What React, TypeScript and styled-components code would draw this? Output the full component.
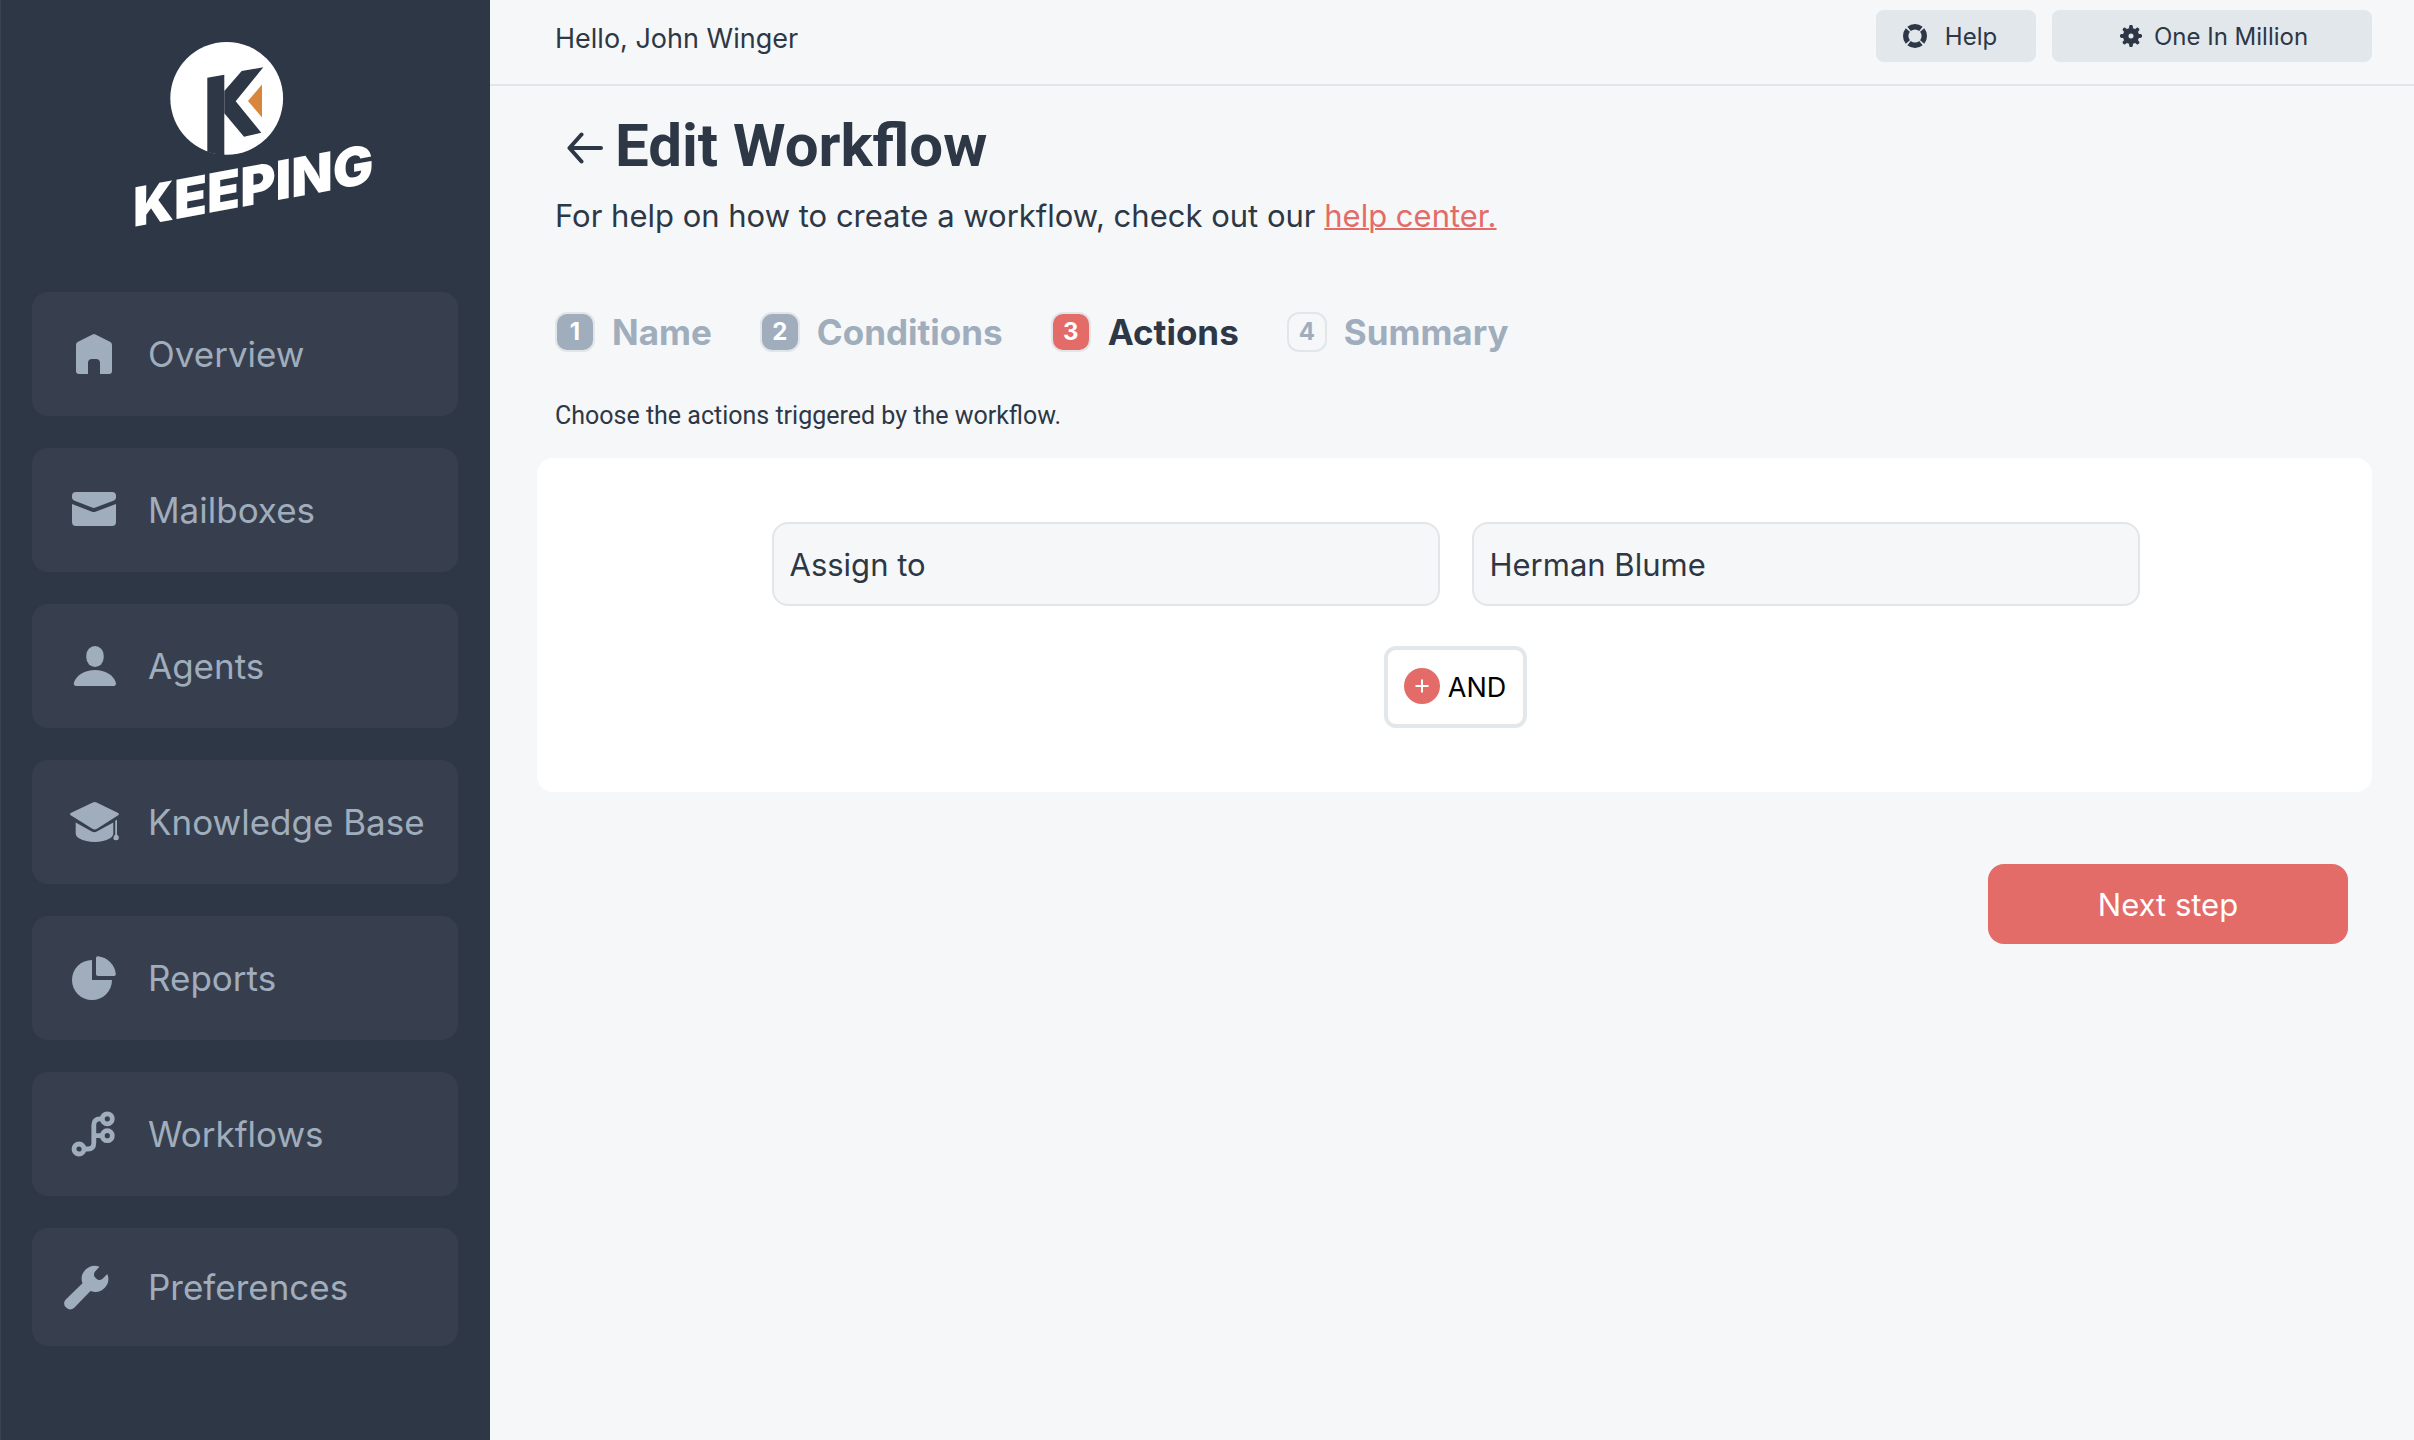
import React from "react";
import styled, { createGlobalStyle, css } from "styled-components";

const color = {
  navy: "#2d3746",
  navyItem: "#373f4e",
  navyEdge: "#384454",
  muted: "#a0adbc",
  ink: "#2d3745",
  page: "#f5f7f9",
  line: "#e2e6e9",
  chip: "#e2e7eb",
  accent: "#e36c68",
  brandOrange: "#d9863d",
};

const sans = `Inter, Roboto, "Liberation Sans", sans-serif`;
const rounded = `Roboto, Inter, "Liberation Sans", sans-serif`;

const GlobalStyle = createGlobalStyle`
  *, *::before, *::after { box-sizing: border-box; }
  body { margin: 0; background: ${color.page}; color: ${color.ink}; font-family: ${sans}; }
  button, select { font-family: inherit; }
`;

const Shell = styled.div`
  display: grid;
  grid-template-columns: 490px minmax(0, 1fr);
  min-height: 100vh;
`;

const Sidebar = styled.aside`
  display: flex;
  flex-direction: column;
  gap: 64px;
  padding: 40px 32px 64px 31px;
  border-left: 1px solid ${color.navyEdge};
  background: ${color.navy};
`;

const Brand = styled.a`
  display: block;
  align-self: center;
  height: 188px;
  margin-left: 18px;
`;

const Nav = styled.nav`
  display: flex;
  flex-direction: column;
  gap: 32px;
`;

const NavItem = styled.a<{ $short?: boolean }>`
  display: flex;
  align-items: center;
  gap: 32px;
  height: ${(p) => (p.$short ? 118 : 124)}px;
  padding-left: 40px;
  border-radius: 16px;
  background: ${color.navyItem};
  color: ${color.muted};
  font-size: 35px;
  text-decoration: none;
  white-space: nowrap;
`;

const NavIcon = styled.svg`
  flex: none;
  width: 44px;
  height: 44px;
  overflow: visible;
  fill: currentColor;
`;

const Column = styled.div`
  display: flex;
  flex-direction: column;
`;

const TopBar = styled.header`
  display: flex;
  align-items: center;
  justify-content: space-between;
  padding: 10px 42px 22px 65px;
  border-bottom: 2px solid ${color.line};
`;

const Greeting = styled.p`
  margin: 6px 0 0;
  font-size: 27px;
  line-height: 32px;
`;

const TopActions = styled.div`
  display: flex;
  gap: 16px;
`;

const ChipButton = styled.button<{ $wide?: boolean }>`
  display: flex;
  align-items: center;
  justify-content: center;
  gap: ${(p) => (p.$wide ? 12 : 18)}px;
  width: ${(p) => (p.$wide ? 320 : 160)}px;
  height: 52px;
  padding: ${(p) => (p.$wide ? "0 0 0 4px" : "0 12px 0 0")};
  border: 0;
  border-radius: 8px;
  background: ${color.chip};
  color: ${color.ink};
  font-size: 24px;
`;

const Main = styled.main`
  display: flex;
  flex-direction: column;
  padding: 24px 42px 48px 47px;
`;

const Intro = styled.div`
  padding-left: 18px;
`;

const TitleRow = styled.div`
  display: flex;
  align-items: center;
  gap: 12px;
  padding-left: 12px;
`;

const BackButton = styled.button`
  display: flex;
  padding: 4px 0 0;
  border: 0;
  background: none;
  color: ${color.ink};
`;

const Title = styled.h1`
  margin: 0;
  font-family: ${rounded};
  font-size: 60px;
  font-weight: 700;
  line-height: 72px;
`;

const Lead = styled.p`
  margin: 14px 0 0;
  font-size: 31px;
  line-height: 40px;
`;

const HelpLink = styled.a`
  color: ${color.accent};
  text-decoration: underline;
  text-decoration-thickness: 2px;
`;

const Steps = styled.ol`
  display: flex;
  gap: 48px;
  margin: 76px 0 0;
  padding: 0;
  list-style: none;
`;

type StepState = "done" | "current" | "next";

const Step = styled.li<{ $state: StepState }>`
  display: flex;
  align-items: center;
  gap: 17px;
  color: ${(p) => (p.$state === "current" ? color.ink : color.muted)};
  font-size: 35px;
  font-weight: 700;
  line-height: 40px;
`;

const StepBadge = styled.span<{ $state: StepState }>`
  display: flex;
  align-items: center;
  justify-content: center;
  width: 40px;
  height: 40px;
  border: 2px solid ${color.line};
  border-radius: 12px;
  font-size: 24px;
  ${(p) =>
    p.$state !== "next" &&
    css`
      background: ${p.$state === "current" ? color.accent : color.muted};
      color: #fff;
    `}
`;

const Hint = styled.p`
  margin: 48px 0 26px;
  font-family: ${rounded};
  font-size: 25px;
  line-height: 32px;
`;

const Card = styled.section`
  display: flex;
  flex-direction: column;
  align-items: center;
  gap: 40px;
  padding: 64px 48px 64px 50px;
  border-radius: 16px;
  background: #fff;
`;

const Fields = styled.div`
  display: grid;
  grid-template-columns: 1fr 1fr;
  gap: 32px;
  width: 100%;
  max-width: 1368px;
`;

const Field = styled.select`
  appearance: none;
  width: 100%;
  height: 84px;
  padding: 0 16px;
  border: 2px solid ${color.line};
  border-radius: 16px;
  background: ${color.page};
  color: ${color.ink};
  font-size: 31px;
`;

const AndButton = styled.button`
  display: flex;
  align-items: center;
  gap: 8px;
  height: 82px;
  padding: 0 17px 0 16px;
  border: 4px solid ${color.chip};
  border-radius: 12px;
  background: #fff;
  color: #000;
  font-size: 27px;
`;

const NextButton = styled.button`
  align-self: flex-end;
  width: 360px;
  height: 80px;
  margin: 72px 24px 0 0;
  border: 0;
  border-radius: 16px;
  background: ${color.accent};
  color: #fff;
  font-size: 31px;
`;

const Logo = () => (
  <svg width="240" height="188" viewBox="134 40 240 188" overflow="visible" role="img" aria-label="Keeping">
    <circle cx="226.7" cy="98.3" r="56.4" fill="#fff" />
    <path d="M207.3 77.7 224.3 74.7V156L207.3 152Z" fill={color.navy} />
    <path d="M224.3 91 241.7 71 263.3 67.3 235.7 101.3 261.3 132.7 244 136.7 224.3 113.3Z" fill={color.navy} />
    <path d="M248 101 262 84.5V117.5Z" fill={color.brandOrange} />
    <text
      transform="translate(133 227) skewY(-10.5)"
      fontFamily="Inter, sans-serif"
      fontWeight="900"
      fontSize="54"
      fill="#fff"
    >
      KEEPING
    </text>
  </svg>
);

const HomeIcon = () => (
  <NavIcon viewBox="0 0 44 44" aria-hidden="true">
    <path d="M4 13Q4 10.9 5.6 10L20.5 2.4Q22 1.7 23.5 2.4L38.4 10Q40 10.9 40 13V39Q40 42 37 42H28V31Q28 27 24 27H20Q16 27 16 31V42H7Q4 42 4 39Z" />
  </NavIcon>
);

const MailIcon = () => (
  <NavIcon viewBox="0 0 44 44" aria-hidden="true">
    <path d="M0 8Q0 4 4 4H40Q44 4 44 8V9.5Q44 11.5 42 12.4L23.5 19.6Q21.8 20.2 20 19.6L2 12.4Q0 11.5 0 9.5Z" />
    <path d="M0 16 20 23.7Q21.8 24.3 23.5 23.7L44 16V34Q44 38 40 38H4Q0 38 0 34Z" />
  </NavIcon>
);

const PersonIcon = () => (
  <NavIcon viewBox="0 0 44 44" aria-hidden="true">
    <rect x="14.3" y="2" width="17.4" height="21" rx="8.7" ry="9.6" />
    <path d="M4.5 42Q1 42 2 38.6C4.4 31 13 26 23 26S41.6 31 43.8 38.6Q44.6 42 41.5 42Z" />
  </NavIcon>
);

const CapIcon = () => (
  <NavIcon viewBox="0 0 44 44" aria-hidden="true">
    <path d="M20.8 2.6Q22.7 1.6 24.6 2.6L46.2 12.9Q48 14 46.2 15.2L25 28.8Q22.7 30.2 20.4 28.8L-1.3 15.2Q-3 14 -1.3 12.9Z" />
    <path d="M3.7 22.5 19.8 31.6Q22.3 33 24.8 31.6L41.3 22.5V33Q41.3 36.5 38 38.2Q31.5 42 22.7 42T7 38.2Q3.7 36.5 3.7 33Z" />
    <path d="M43.2 20.8 45 19.8V34.5Q47 35.6 46.9 38T44 40.3 41.4 38 43.2 34.5Z" />
  </NavIcon>
);

const PieIcon = () => (
  <NavIcon viewBox="0 0 44 44" aria-hidden="true">
    <path d="M20 4A20 20 0 1 0 40 24H20Z" />
    <path d="M24 2Q24 0 26 .2A20 20 0 0 1 43.8 18Q44 20 42 20H26Q24 20 24 18Z" />
  </NavIcon>
);

const FlowIcon = () => (
  <NavIcon viewBox="0 0 44 44" aria-hidden="true">
    <g fill="none" stroke="currentColor" strokeWidth="4.8">
      <circle cx="35.3" cy="6.8" r="5" />
      <circle cx="35.3" cy="23.7" r="5" />
      <circle cx="7" cy="37" r="5" />
      <path d="M13 37H16Q21.8 37 21.8 31V13Q21.8 6.8 28 6.8H30M21.8 23.7H30" />
    </g>
  </NavIcon>
);

const WrenchIcon = () => (
  <NavIcon viewBox="0 0 44 44" aria-hidden="true">
    <path d="M27.5 1.8 23.3 6.3A4.5 4.5 0 0 0 23.2 12.6L24.4 13.8A4.5 4.5 0 0 0 30.8 13.6L35.3 9A13 13 0 0 1 18.5 26L2 43A6 6 0 0 1-6.5 34.7L10.5 18.3A13 13 0 0 1 27.5 1.8Z" />
  </NavIcon>
);

const LifebuoyIcon = () => (
  <svg width="24" height="24" viewBox="0 0 24 24" fill="none" aria-hidden="true">
    <circle
      cx="12"
      cy="12"
      r="9.3"
      stroke="currentColor"
      strokeWidth="5.4"
      pathLength="100"
      strokeDasharray="22 3"
      strokeDashoffset="11"
    />
  </svg>
);

const GearIcon = () => (
  <svg width="22" height="22" viewBox="0 0 22 22" fill="none" stroke="currentColor" aria-hidden="true">
    <circle cx="11" cy="11" r="5.3" strokeWidth="5.6" />
    <path
      d="M11 1.8V4M11 18V20.2M1.8 11H4M18 11H20.2M4.6 4.6 6 6M16 16 17.4 17.4M4.6 17.4 6 16M16 6 17.4 4.6"
      strokeWidth="3.8"
      strokeLinecap="round"
    />
  </svg>
);

const ArrowLeftIcon = () => (
  <svg
    width="36"
    height="32"
    viewBox="0 0 36 32"
    fill="none"
    stroke="currentColor"
    strokeWidth="4"
    strokeLinecap="round"
    strokeLinejoin="round"
    aria-hidden="true"
  >
    <path d="M34 16H2.5M14.5 2.5 2.5 16 14.5 29.5" />
  </svg>
);

const PlusIcon = () => (
  <svg width="36" height="36" viewBox="0 0 36 36" overflow="visible" aria-hidden="true">
    <circle cx="18" cy="17" r="18" fill={color.accent} />
    <path d="M18 10.5V23.5M11.5 17H24.5" stroke="#fff" strokeWidth="2" />
  </svg>
);

const navItems = [
  { label: "Overview", Icon: HomeIcon },
  { label: "Mailboxes", Icon: MailIcon },
  { label: "Agents", Icon: PersonIcon },
  { label: "Knowledge Base", Icon: CapIcon },
  { label: "Reports", Icon: PieIcon },
  { label: "Workflows", Icon: FlowIcon },
  { label: "Preferences", Icon: WrenchIcon, short: true },
];

const steps: { label: string; state: StepState }[] = [
  { label: "Name", state: "done" },
  { label: "Conditions", state: "done" },
  { label: "Actions", state: "current" },
  { label: "Summary", state: "next" },
];

export default function App() {
  return (
    <>
      <GlobalStyle />
      <Shell>
        <Sidebar>
          <Brand href="#">
            <Logo />
          </Brand>
          <Nav aria-label="Main">
            {navItems.map(({ label, Icon, short }) => (
              <NavItem key={label} href="#" $short={short}>
                <Icon />
                {label}
              </NavItem>
            ))}
          </Nav>
        </Sidebar>

        <Column>
          <TopBar>
            <Greeting>Hello, John Winger</Greeting>
            <TopActions>
              <ChipButton type="button">
                <LifebuoyIcon />
                Help
              </ChipButton>
              <ChipButton type="button" $wide>
                <GearIcon />
                One In Million
              </ChipButton>
            </TopActions>
          </TopBar>

          <Main>
            <Intro>
              <TitleRow>
                <BackButton type="button" aria-label="Back">
                  <ArrowLeftIcon />
                </BackButton>
                <Title>Edit Workflow</Title>
              </TitleRow>
              <Lead>
                For help on how to create a workflow, check out our <HelpLink href="#">help center.</HelpLink>
              </Lead>
              <Steps>
                {steps.map(({ label, state }, i) => (
                  <Step key={label} $state={state} aria-current={state === "current" ? "step" : undefined}>
                    <StepBadge $state={state}>{i + 1}</StepBadge>
                    {label}
                  </Step>
                ))}
              </Steps>
              <Hint>Choose the actions triggered by the workflow.</Hint>
            </Intro>

            <Card>
              <Fields>
                <Field aria-label="Action" defaultValue="assign">
                  <option value="assign">Assign to</option>
                </Field>
                <Field aria-label="Agent" defaultValue="herman">
                  <option value="herman">Herman Blume</option>
                </Field>
              </Fields>
              <AndButton type="button">
                <PlusIcon />
                AND
              </AndButton>
            </Card>

            <NextButton type="button">Next step</NextButton>
          </Main>
        </Column>
      </Shell>
    </>
  );
}
